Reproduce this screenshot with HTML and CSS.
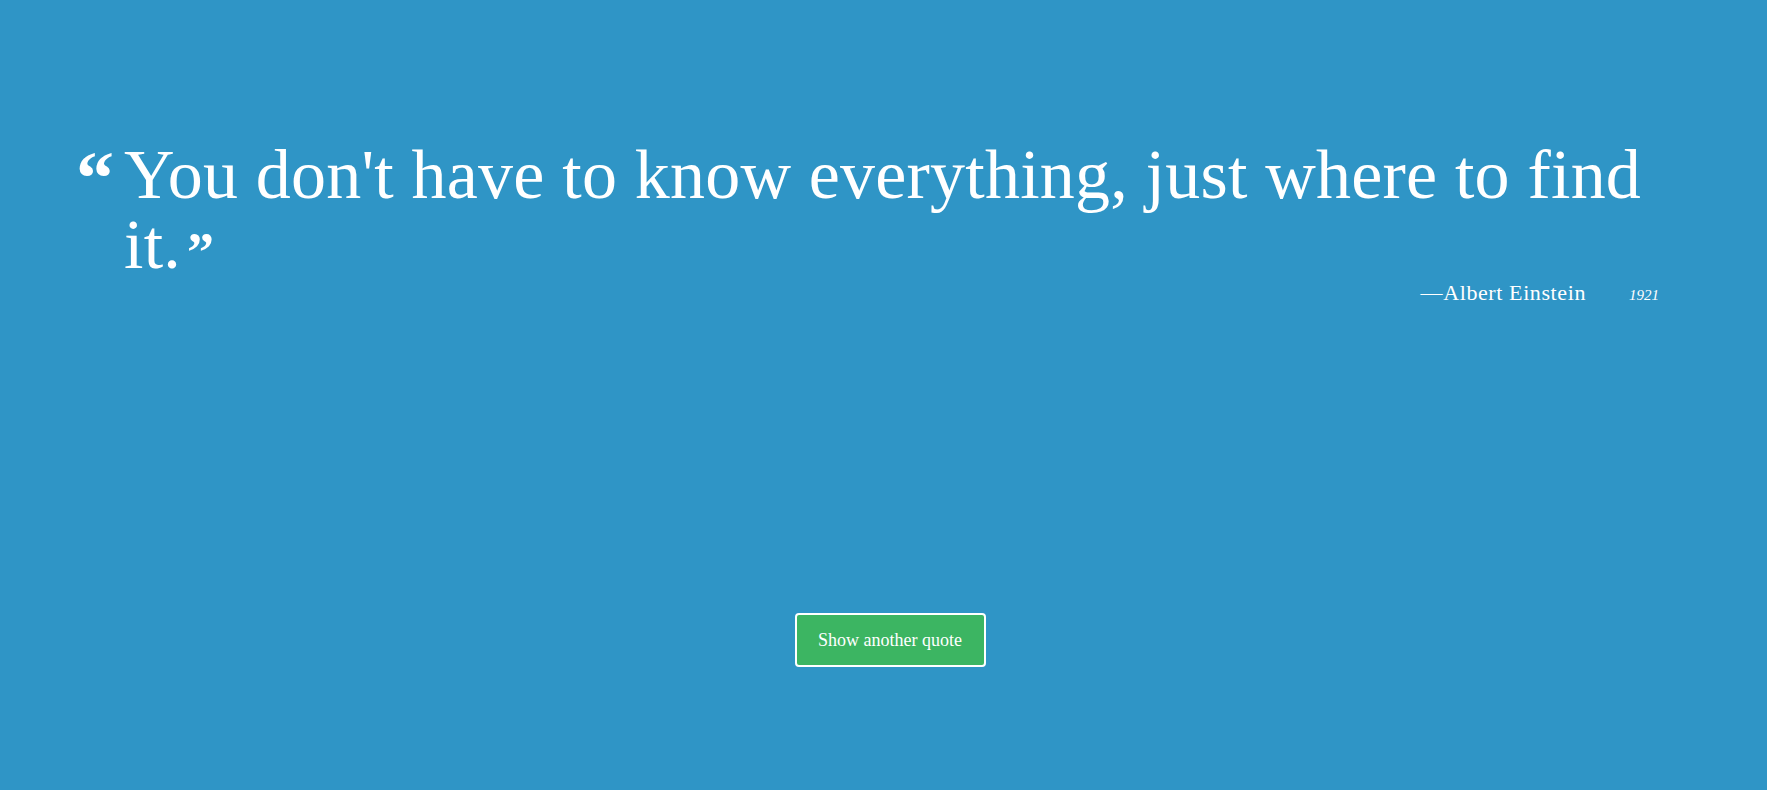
FILE: index.html
```html
<!DOCTYPE html>
<html lang="en">
<head>
<meta charset="utf-8">
<title>Random Quote</title>
<link rel="stylesheet" href="styles.css">
</head>
<body>
<main class="page">
  <section class="quote-box">
    <blockquote class="quote">
      <span class="mark-open">&ldquo;</span>
      <p class="quote-text">You don't have to know everything, just where to find it.<span class="mark-close">&rdquo;</span></p>
    </blockquote>
    <footer class="byline">
      <span class="author">&mdash;Albert Einstein</span>
      <span class="year">1921</span>
    </footer>
  </section>
  <div class="actions">
    <button class="btn-next" type="button">Show another quote</button>
  </div>
</main>
</body>
</html>
```

FILE: styles.css
```css
html, body {
  margin: 0;
  padding: 0;
  height: 100%;
}
body {
  background: #2f95c6;
  color: #ffffff;
  font-family: "Liberation Serif", "Times New Roman", serif;
}
.page {
  display: flex;
  flex-direction: column;
  min-height: 100%;
  box-sizing: border-box;
  padding: 140px 79px 0 75px;
}
.quote-box {
  display: flex;
  flex-direction: column;
}
.quote {
  display: flex;
  align-items: flex-start;
  margin: 0;
}
.mark-open {
  flex: 0 0 auto;
  width: 48px;
  margin-left: 1px;
  font-size: 76px;
  line-height: 76px;
  font-weight: bold;
}
.quote-text {
  margin: 0;
  font-size: 70px;
  line-height: 70px;
  letter-spacing: 0.2px;
  max-width: 1570px;
}
.mark-close {
  font-size: 54px;
  font-weight: bold;
  line-height: 0;
  vertical-align: -2px;
  margin-left: 6px;
}
.byline {
  display: flex;
  justify-content: flex-end;
  align-items: baseline;
  gap: 43px;
  padding-right: 29px;
  margin-top: 0;
}
.author {
  font-size: 22px;
  letter-spacing: 0.6px;
}
.year {
  font-size: 15px;
  font-style: italic;
}
.actions {
  display: flex;
  justify-content: center;
  margin-top: 307px;
  padding-left: 17px;
}
.btn-next {
  background: #3cb562;
  color: #ffffff;
  border: 2px solid #ffffff;
  border-radius: 4px;
  width: 191px;
  height: 54px;
  font-family: "Liberation Serif", "Times New Roman", serif;
  font-size: 18px;
  cursor: pointer;
}
```
